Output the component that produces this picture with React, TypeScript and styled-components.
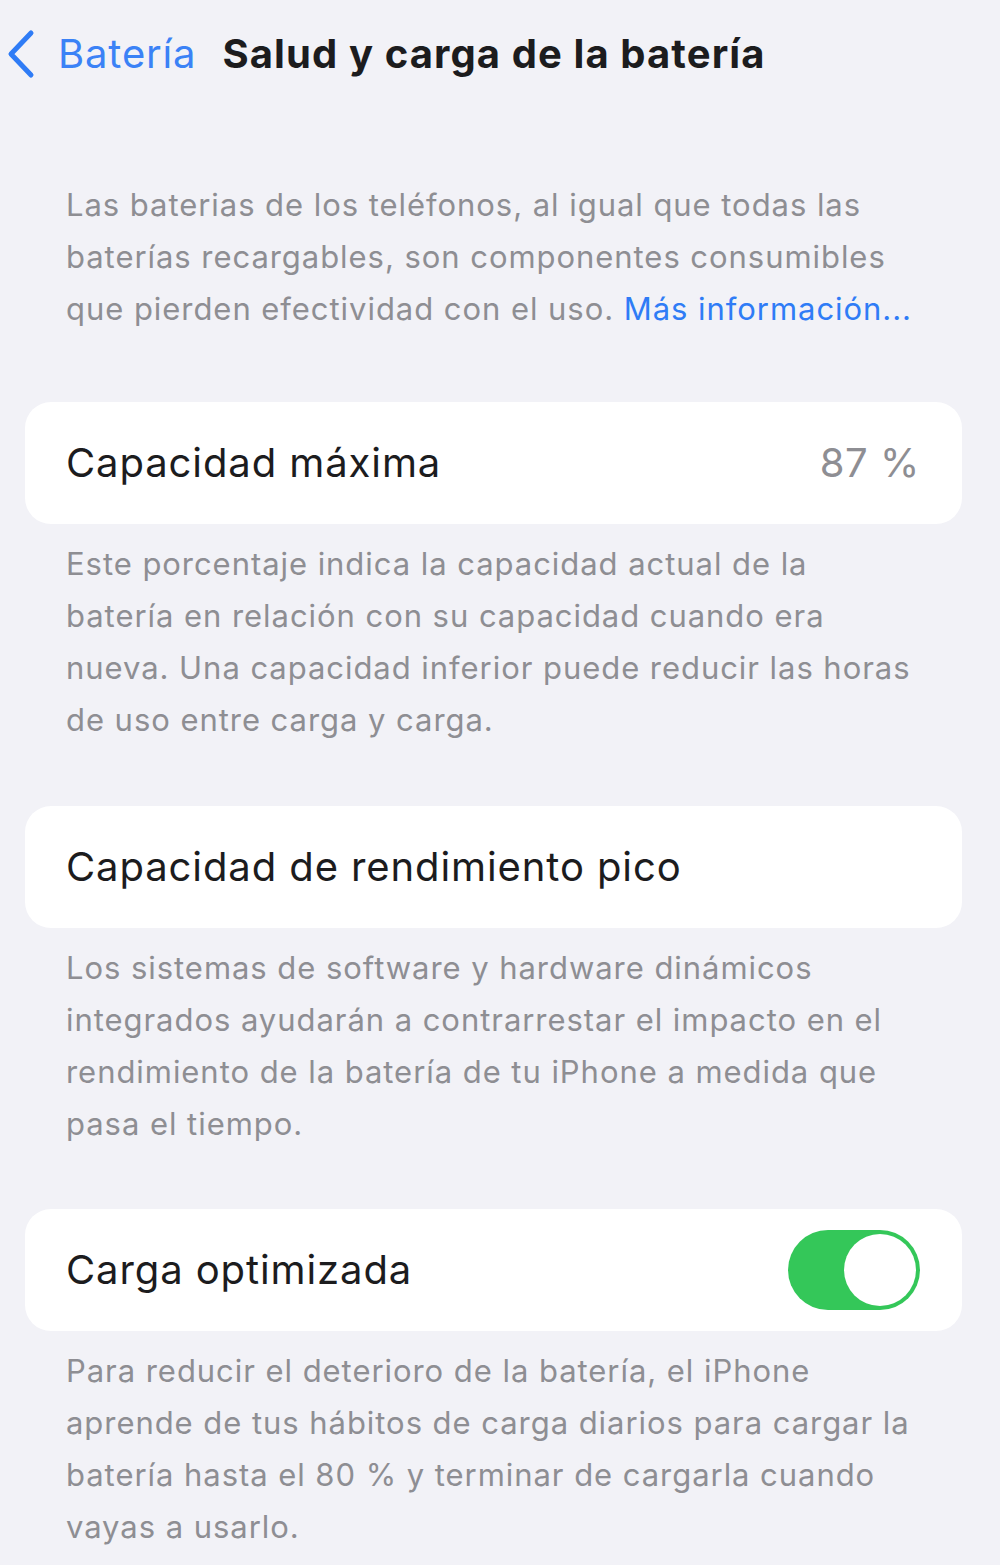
import React from 'react';
import styled, { createGlobalStyle } from 'styled-components';

const GlobalStyle = createGlobalStyle`
  html, body {
    margin: 0;
    padding: 0;
    background: #f2f2f7;
  }
  body {
    font-family: Inter, "Noto Sans", sans-serif;
    -webkit-font-smoothing: antialiased;
  }
`;

const Page = styled.div`
  width: 1000px;
  min-height: 1565px;
  background: #f2f2f7;
  display: flex;
  flex-direction: column;
`;

const NavBar = styled.header`
  display: flex;
  align-items: center;
  height: 108px;
  padding-left: 6px;
`;

const BackButton = styled.button`
  display: flex;
  align-items: center;
  gap: 22px;
  border: none;
  background: none;
  padding: 0;
  color: #3b82f6;
  font: 400 40px/1 Inter, sans-serif;
  letter-spacing: 0.85px;
  cursor: pointer;
`;

const NavTitle = styled.h1`
  margin: 0 0 0 26px;
  color: #1c1c1e;
  font: 700 40px/1 Inter, sans-serif;
  letter-spacing: 1.1px;
`;

const Content = styled.main`
  display: flex;
  flex-direction: column;
  padding: 71px 38px 0 25px;
`;

const Footnote = styled.p<{ $after?: number }>`
  margin: 0 0 ${(p) => p.$after ?? 0}px;
  padding-left: 41px;
  color: #8e8e93;
  font: 400 31px/52px Inter, sans-serif;
  letter-spacing: 0.95px;
  white-space: nowrap;
`;

const Link = styled.a`
  color: #2f7cf6;
  text-decoration: none;
`;

const Card = styled.section`
  display: flex;
  align-items: center;
  justify-content: space-between;
  height: 122px;
  padding: 0 42px 0 41px;
  background: #ffffff;
  border-radius: 26px;
  margin-bottom: 14px;
`;

const CardTitle = styled.span`
  color: #1c1c1e;
  font: 400 40px/1 Inter, sans-serif;
  letter-spacing: 0.9px;
`;

const CardValue = styled.span`
  color: #8e8e93;
  font: 400 40px/1 Inter, sans-serif;
  letter-spacing: 0.6px;
`;

const Toggle = styled.div<{ $on: boolean }>`
  position: relative;
  width: 132px;
  height: 80px;
  border-radius: 40px;
  background: ${(p) => (p.$on ? '#34c759' : '#e5e5ea')};
`;

const Knob = styled.span<{ $on: boolean }>`
  position: absolute;
  top: 4px;
  left: ${(p) => (p.$on ? '56px' : '4px')};
  width: 72px;
  height: 72px;
  border-radius: 50%;
  background: #ffffff;
`;

const Chevron = () => (
  <svg width="30" height="50" viewBox="0 0 30 50" fill="none">
    <path d="M25 4 L5 25 L25 46" stroke="#2f7cf6" strokeWidth="5" strokeLinecap="round" strokeLinejoin="round" />
  </svg>
);

const App: React.FC = () => (
  <Page>
    <GlobalStyle />
    <NavBar>
      <BackButton>
        <Chevron />
        Batería
      </BackButton>
      <NavTitle>Salud y carga de la batería</NavTitle>
    </NavBar>
    <Content>
      <Footnote $after={67}>
        Las baterias de los teléfonos, al igual que todas las
        <br />
        baterías recargables, son componentes consumibles
        <br />
        que pierden efectividad con el uso. <Link href="#">Más información...</Link>
      </Footnote>

      <Card>
        <CardTitle>Capacidad máxima</CardTitle>
        <CardValue>87 %</CardValue>
      </Card>
      <Footnote $after={60}>
        Este porcentaje indica la capacidad actual de la
        <br />
        batería en relación con su capacidad cuando era
        <br />
        nueva. Una capacidad inferior puede reducir las horas
        <br />
        de uso entre carga y carga.
      </Footnote>

      <Card>
        <CardTitle>Capacidad de rendimiento pico</CardTitle>
      </Card>
      <Footnote $after={59}>
        Los sistemas de software y hardware dinámicos
        <br />
        integrados ayudarán a contrarrestar el impacto en el
        <br />
        rendimiento de la batería de tu iPhone a medida que
        <br />
        pasa el tiempo.
      </Footnote>

      <Card>
        <CardTitle>Carga optimizada</CardTitle>
        <Toggle $on>
          <Knob $on />
        </Toggle>
      </Card>
      <Footnote>
        Para reducir el deterioro de la batería, el iPhone
        <br />
        aprende de tus hábitos de carga diarios para cargar la
        <br />
        batería hasta el 80 % y terminar de cargarla cuando
        <br />
        vayas a usarlo.
      </Footnote>
    </Content>
  </Page>
);

export default App;
